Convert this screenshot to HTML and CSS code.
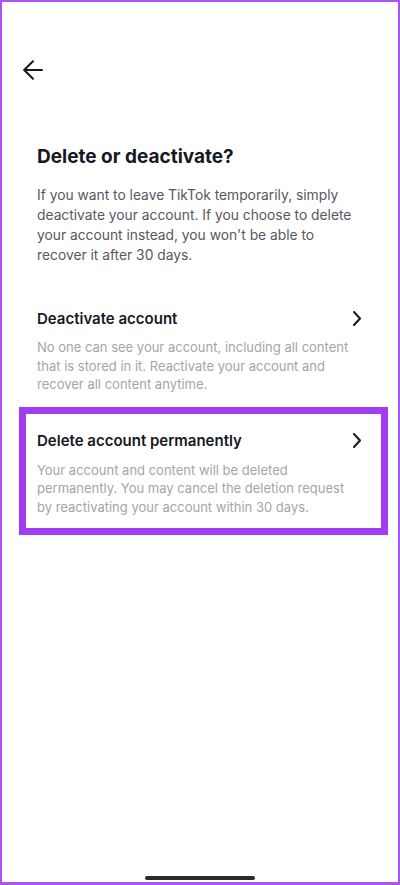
FILE: index.html
```html
<!DOCTYPE html>
<html lang="en">
<head>
  <meta charset="UTF-8" />
  <meta name="viewport" content="width=device-width, initial-scale=1.0"/>
  <title>Delete or deactivate?</title>
  <link rel="stylesheet" href="styles.css">
</head>
<body>
  <div class="screen">
    <div class="topbar">
      <button class="back-btn" aria-label="Back">
        <svg width="22" height="22" viewBox="0 0 22 22" fill="none" stroke="#161823" stroke-width="2" stroke-linecap="round" stroke-linejoin="round">
          <path d="M20 11H2.5"/>
          <path d="M11 2.2L2.2 11L11 19.8"/>
        </svg>
      </button>
    </div>

    <div class="intro">
      <h1 class="title">Delete or deactivate?</h1>
      <p class="intro-text">If you want to leave TikTok temporarily, simply deactivate your account. If you choose to delete your account instead, you won't be able to recover it after 30 days.</p>
    </div>

    <div class="option">
      <div class="option-head">
        <div class="option-title">Deactivate account</div>
        <svg class="chevron" width="8" height="15" viewBox="0 0 8 15" fill="none" stroke="#161823" stroke-width="2" stroke-linecap="round" stroke-linejoin="round">
          <path d="M1 1L7 7.5L1 14"/>
        </svg>
      </div>
      <div class="option-desc">No one can see your account, including all content that is stored in it. Reactivate your account and recover all content anytime.</div>
    </div>

    <div class="option highlighted">
      <div class="option-head">
        <div class="option-title">Delete account permanently</div>
        <svg class="chevron" width="8" height="15" viewBox="0 0 8 15" fill="none" stroke="#161823" stroke-width="2" stroke-linecap="round" stroke-linejoin="round">
          <path d="M1 1L7 7.5L1 14"/>
        </svg>
      </div>
      <div class="option-desc">Your account and content will be deleted permanently. You may cancel the deletion request by reactivating your account within 30 days.</div>
    </div>

    <div class="home-indicator"></div>
  </div>
</body>
</html>
```

FILE: styles.css
```css
* {
  box-sizing: border-box;
}

body {
  margin: 0;
  background: #ffffff;
  font-family: Inter, "Noto Sans", sans-serif;
  color: #161823;
}

.screen {
  width: 400px;
  height: 885px;
  border: 2px solid #a855f7;
  border-bottom-width: 3px;
  display: flex;
  flex-direction: column;
  background: #ffffff;
}

.topbar {
  padding: 57px 0 0 20px;
}

.back-btn {
  display: block;
  width: 22px;
  height: 22px;
  padding: 0;
  border: none;
  background: none;
  cursor: pointer;
}

.back-btn svg {
  display: block;
}

.intro {
  padding: 0 35px;
  margin-top: 63px;
}

.title {
  margin: 0;
  font-size: 19px;
  line-height: 26px;
  font-weight: 700;
  color: #161823;
}

.intro-text {
  margin: 15px 0 0 0;
  font-size: 13.8px;
  line-height: 20px;
  color: #57585f;
}

.option {
  margin: 26px 17px 0 24px;
  padding: 16px 20px 12px 11px;
}

.option + .option {
  margin-top: 8px;
}

.option.highlighted {
  outline: 7px solid #a23cf2;
}

.option-head {
  display: flex;
  align-items: center;
  justify-content: space-between;
  height: 22px;
}

.option-title {
  font-size: 15px;
  font-weight: 600;
  color: #161823;
}

.chevron {
  display: block;
}

.option-desc {
  margin-top: 9px;
  font-size: 13px;
  line-height: 18.5px;
  color: #a4a5a9;
}

.home-indicator {
  margin: auto auto 2px auto;
  width: 110px;
  height: 4px;
  border-radius: 2px;
  background: #2b2b2b;
}
```
